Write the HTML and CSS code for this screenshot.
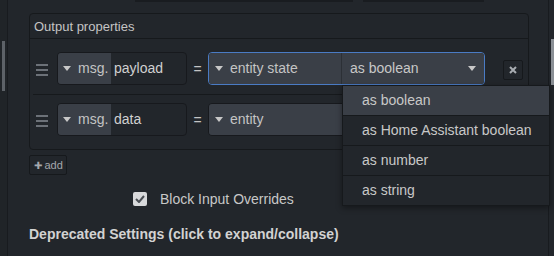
FILE: index.html
```html
<!doctype html>
<html lang="en">
  <head>
    <meta charset="UTF-8" />
    <meta name="viewport" content="width=device-width, initial-scale=1" />
    <title>Output properties</title>
    <link rel="stylesheet" href="styles.css">
  </head>
  <body>
    <div class="gutter"><div class="thumb"></div></div>

    <div class="main">
      <div class="prev-row">
        <span class="prev prev-a"></span>
        <span class="prev prev-b"></span>
      </div>

      <div class="props">
        <div class="props-head">Output properties</div>
        <ol class="props-list">
          <li class="prop-row">
            <span class="handle"><i></i><i></i><i></i></span>
            <div class="typed">
              <span class="type-btn"><span class="caret"></span>msg.</span>
              <span class="value">payload</span>
            </div>
            <span class="eq">=</span>
            <div class="typed wide focused">
              <span class="type-btn"><span class="caret"></span>entity state</span>
              <span class="select">as boolean<span class="caret"></span></span>
            </div>
            <button class="remove" type="button">
              <svg width="8" height="8" viewBox="0 0 8 8"><path d="M1 1 L7 7 M7 1 L1 7" stroke="#a8acb1" stroke-width="2"/></svg>
            </button>
          </li>
          <li class="prop-row">
            <span class="handle"><i></i><i></i><i></i></span>
            <div class="typed">
              <span class="type-btn"><span class="caret"></span>msg.</span>
              <span class="value">data</span>
            </div>
            <span class="eq">=</span>
            <div class="typed wide">
              <span class="type-btn full"><span class="caret"></span>entity</span>
            </div>
            <button class="remove" type="button">
              <svg width="8" height="8" viewBox="0 0 8 8"><path d="M1 1 L7 7 M7 1 L1 7" stroke="#a8acb1" stroke-width="2"/></svg>
            </button>
          </li>
        </ol>
      </div>

      <button class="add" type="button"><span class="plus">&#x271A;</span>add</button>

      <label class="check">
        <span class="box">
          <svg width="10" height="8" viewBox="0 0 10 8"><path d="M1 4 L4 7 L9 1" fill="none" stroke="#4a4e54" stroke-width="2"/></svg>
        </span>
        Block Input Overrides
      </label>

      <div class="deprecated">Deprecated Settings (click to expand/collapse)</div>
    </div>

    <div class="scrollbar"><div class="thumb"></div></div>

    <ul class="dropdown">
      <li class="active">as boolean</li>
      <li>as Home Assistant boolean</li>
      <li>as number</li>
      <li>as string</li>
    </ul>
  </body>
</html>
```

FILE: styles.css
```css
body {
  margin: 0;
  width: 554px;
  height: 256px;
  overflow: hidden;
  display: flex;
  background: #22262b;
  color: #c8c8c8;
  font-family: "Liberation Sans", Arial, sans-serif;
  font-size: 14px;
}
.gutter {
  width: 7px;
  border-right: 1px solid #181b1f;
  background: #202428;
  padding-top: 41px;
}
.gutter .thumb {
  margin-left: 2px;
  width: 3px;
  height: 50px;
  background: #5d6268;
}
.main {
  flex: 1;
  border-right: 1px solid #181b1f;
  padding-left: 21px;
}
.scrollbar {
  width: 5px;
  padding-top: 39px;
}
.scrollbar .thumb {
  margin-left: 2px;
  width: 3px;
  height: 46px;
  background: #8a8f95;
}
.prev-row {
  display: flex;
  height: 2px;
}
.prev {
  height: 2px;
  background: #191c20;
}
.prev-a {
  margin-left: 106px;
  width: 218px;
}
.prev-b {
  margin-left: 10px;
  width: 121px;
}
.props {
  margin-top: 11px;
  width: 498px;
  border: 1px solid #16191c;
  border-radius: 4px;
}
.props-head {
  line-height: 24px;
  padding: 1px 0 0 4px;
  box-sizing: border-box;
  height: 25px;
  font-size: 13px;
  color: #c4c4c4;
  border-bottom: 1px solid #16191c;
}
.props-list {
  list-style: none;
  margin: 0;
  padding: 5px 0 4px;
}
.prop-row {
  display: flex;
  align-items: center;
  margin: 0 3px;
  padding: 8px 0 9px 3px;
  border-bottom: 1px solid #16191c;
}
.prop-row:last-child {
  border-bottom: none;
}
.handle {
  display: flex;
  flex-direction: column;
  gap: 3px;
  width: 12px;
  margin-right: 9px;
  margin-top: 3px;
}
.handle i {
  display: block;
  height: 2px;
  background: #6c7178;
}
.typed {
  display: flex;
  width: 130px;
  height: 33px;
  box-sizing: border-box;
  border: 1px solid #17191d;
  border-radius: 4px;
  overflow: hidden;
  line-height: 31px;
}
.typed.wide {
  width: 277px;
}
.typed.focused {
  border-color: #4a7bc4;
}
.type-btn {
  display: flex;
  align-items: center;
  background: #3a3f47;
  padding: 0 3px 0 5px;
  width: 53px;
  box-sizing: border-box;
  color: #c4c4c4;
  white-space: nowrap;
}
.wide .type-btn {
  width: 133px;
  padding-left: 6px;
  border-right: 1px solid #2c3036;
}
.wide .type-btn.full {
  width: 100%;
  border-right: none;
}
.caret {
  display: inline-block;
  width: 0;
  height: 0;
  border-left: 4.5px solid transparent;
  border-right: 4.5px solid transparent;
  border-top: 5px solid #c8c8c8;
  margin-right: 7px;
}
.value {
  padding-left: 3px;
  color: #d0d0d0;
}
.select {
  flex: 1;
  display: flex;
  align-items: center;
  justify-content: space-between;
  background: #3a3f47;
  padding: 0 8px;
}
.select .caret {
  margin: 0;
}
.eq {
  width: 21px;
  text-align: center;
  color: #c4c4c4;
}
.remove {
  display: flex;
  align-items: center;
  justify-content: center;
  margin-left: 18px;
  margin-top: 3px;
  width: 20px;
  height: 20px;
  padding: 0;
  background: #22262b;
  border: 1px solid #16191c;
  border-radius: 2px;
}
.add {
  display: flex;
  align-items: center;
  margin-top: 5px;
  width: 38px;
  height: 20px;
  padding: 0 0 0 4px;
  background: #22262b;
  border: 1px solid #16191c;
  border-radius: 2px;
  color: #a4a8ad;
  font-family: "Liberation Sans", Arial, sans-serif;
  font-size: 11px;
}
.plus {
  font-family: "DejaVu Sans", sans-serif;
  font-size: 10px;
  margin-right: 2px;
}
.check {
  display: flex;
  align-items: center;
  margin: 16px 0 0 104px;
  height: 16px;
  color: #c8c8c8;
}
.check .box {
  display: flex;
  align-items: center;
  justify-content: center;
  width: 14px;
  height: 14px;
  border-radius: 2px;
  background: #d8d9db;
  margin-right: 13px;
}
.deprecated {
  margin-top: 19px;
  font-weight: bold;
  color: #d2d2d2;
}
.dropdown {
  position: absolute;
  left: 342px;
  top: 85px;
  width: 206px;
  margin: 0;
  padding: 0;
  list-style: none;
  background: #22262b;
  border: 1px solid #16191c;
  box-shadow: 0 2px 6px rgba(0, 0, 0, 0.4);
}
.dropdown li {
  height: 29px;
  line-height: 29px;
  padding-left: 19px;
  border-bottom: 1px solid #16191c;
  color: #c8c8c8;
}
.dropdown li:last-child {
  border-bottom: none;
}
.dropdown li.active {
  background: #3a3f47;
}
```
